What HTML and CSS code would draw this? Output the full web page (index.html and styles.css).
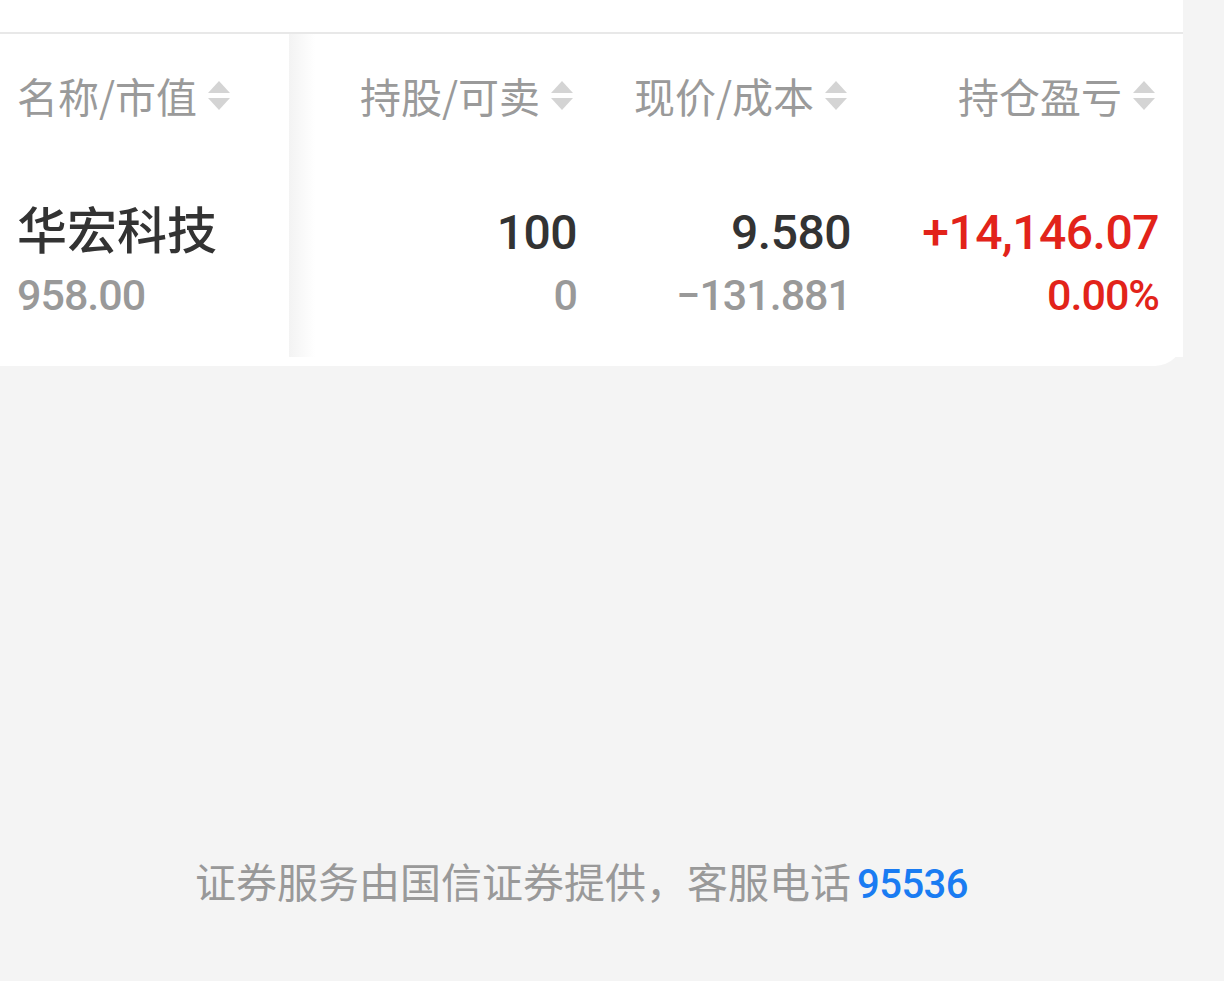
FILE: index.html
```html
<!DOCTYPE html>
<html lang="zh-CN">
<head>
    <meta charset="UTF-8">
    <title>持仓</title>
    <link rel="stylesheet" href="styles.css">
</head>
<body>
    <div class="page">
        <div class="card">
            <div class="card-top"></div>
            <div class="table">
                <div class="fixed-col">
                    <div class="th th-left">名称/市值<svg class="sort" viewBox="0 0 22 29"><path d="M11 0 L22 12 L0 12 Z"/><path d="M0 17 L22 17 L11 29 Z"/></svg></div>
                    <div class="td td-left">
                        <div class="name">华宏科技</div>
                        <div class="sub">958.00</div>
                    </div>
                </div>
                <div class="scroll-cols">
                    <div class="th">持股/可卖<svg class="sort" viewBox="0 0 22 29"><path d="M11 0 L22 12 L0 12 Z"/><path d="M0 17 L22 17 L11 29 Z"/></svg></div>
                    <div class="th">现价/成本<svg class="sort" viewBox="0 0 22 29"><path d="M11 0 L22 12 L0 12 Z"/><path d="M0 17 L22 17 L11 29 Z"/></svg></div>
                    <div class="th">持仓盈亏<svg class="sort" viewBox="0 0 22 29"><path d="M11 0 L22 12 L0 12 Z"/><path d="M0 17 L22 17 L11 29 Z"/></svg></div>
                    <div class="td">
                        <div class="main">100</div>
                        <div class="sub">0</div>
                    </div>
                    <div class="td">
                        <div class="main">9.580</div>
                        <div class="sub">−131.881</div>
                    </div>
                    <div class="td">
                        <div class="main red">+14,146.07</div>
                        <div class="sub red">0.00%</div>
                    </div>
                </div>
            </div>
        </div>
        <div class="footer">证券服务由国信证券提供，客服电话<span class="tel">95536</span></div>
    </div>
</body>
</html>
```

FILE: styles.css
```css
* { margin: 0; padding: 0; box-sizing: border-box; }
html, body { background: #f4f4f4; }
body { font-family: Roboto, "Noto Sans CJK SC", sans-serif; color: #333; }
.page { width: 1224px; height: 981px; }
.card { width: 1183px; background: #fff; border-bottom-right-radius: 28px; padding-bottom: 9px; }
.card-top { height: 34px; border-bottom: 2px solid #e8e8e8; }
.table { display: flex; }
.fixed-col { width: 289px; flex: none; }
.scroll-cols { flex: 1; display: grid; grid-template-columns: 288px 274px 308px; grid-template-rows: 122px 201px; padding-right: 24px; background: linear-gradient(to right, #f3f3f3, #fff 26px) no-repeat; }
.th { height: 122px; display: flex; align-items: center; justify-content: flex-end; font-family: "Noto Sans CJK SC", sans-serif; font-size: 41px; color: #9a9a9a; padding-right: 4px; }
.th-left { justify-content: flex-start; padding-left: 17px; }
.sort { width: 22px; height: 29px; margin-left: 11px; fill: #d4d4d4; }
.td { height: 201px; padding-top: 46px; text-align: right; }
.td-left { text-align: left; padding-left: 17px; }
.name { height: 62px; line-height: 50px; font-family: "Noto Sans CJK SC", sans-serif; font-size: 50px; font-weight: 500; color: #333; }
.main { height: 62px; line-height: 62px; font-size: 48px; font-weight: 500; color: #333; letter-spacing: -0.5px; }
.sub { height: 62px; line-height: 62px; font-size: 43px; font-weight: 500; color: #999; letter-spacing: -1px; }
.red { color: #e2231a; }
.footer { width: 1163px; margin-top: 487px; text-align: center; font-family: "Noto Sans CJK SC", sans-serif; font-size: 41px; color: #999; line-height: 54px; }
.tel { font-family: Roboto, sans-serif; font-weight: 500; color: #1a7cf2; margin-left: 6px; font-size: 40px; letter-spacing: -0.5px; }
```
